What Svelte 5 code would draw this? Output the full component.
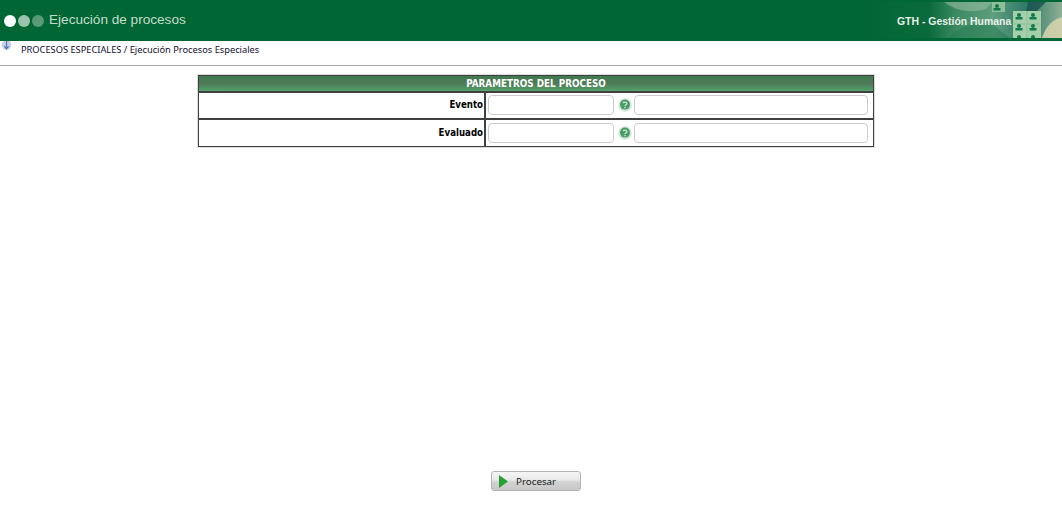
<script>
	let title = "Ejecución de procesos"
	let moduleName = "GTH - Gestión Humana"
	let crumb = "PROCESOS ESPECIALES / Ejecución Procesos Especiales"
	let rows = ["Evento", "Evaluado"]
	let people = [
		[137, 8], [159, 17], [173, 17], [159, 28], [173, 28], [159, 39], [173, 39]
	]
</script>

<div class="page">
	<header class="top">
		<svg class="art" viewBox="0 0 202 41" width="202" height="41" aria-hidden="true">
			<defs>
				<linearGradient id="fade" x1="0" x2="1" y1="0" y2="0">
					<stop offset="0" stop-color="#006633" />
					<stop offset="0.34" stop-color="#0a6a3a" />
					<stop offset="0.48" stop-color="#3d8a62" />
					<stop offset="0.66" stop-color="#5f9f7e" />
					<stop offset="0.82" stop-color="#2f7a68" />
					<stop offset="1" stop-color="#8fae95" />
				</linearGradient>
			</defs>
			<rect y="2" width="202" height="36" fill="url(#fade)" />
			<path d="M84 2 C94 10 110 14 126 9 L132 2Z" fill="#9dc0a0" opacity=".55" />
			<path d="M88 38 C96 28 114 22 132 24 L150 38Z" fill="#1f7a50" opacity=".5" />
			<path d="M168 2 L186 2 L176 12 L166 12Z" fill="#1a4f50" opacity=".8" />
			<path d="M182 38 C186 26 192 20 202 17 L202 38Z" fill="#d8d6ae" opacity=".85" />
			<rect x="132" y="2" width="13" height="10" fill="#8fbf98" />
			<rect x="153" y="11" width="28" height="27" fill="#a4cfa8" />
			<path d="M167 11v27M153 24h28" stroke="#8cbd94" stroke-width="1" />
			<svg x="0" y="2" width="202" height="36" viewBox="0 2 202 36">
				{#each people as p}
					<g fill="#127a4c">
						<circle cx={p[0]} cy={p[1] - 2} r="2" />
						<rect x={p[0] - 3.5} y={p[1]} width="7" height="2.5" />
					</g>
				{/each}
			</svg>
		</svg>
		<div class="dots">
			<span class="dot one"></span>
			<span class="dot two"></span>
			<span class="dot three"></span>
		</div>
		<h1>{title}</h1>
		<span class="module">{moduleName}</span>
	</header>

	<nav class="crumbs">
		<svg class="crumb-icon" viewBox="0 0 12 12" width="12" height="12" aria-hidden="true">
			<circle cx="5.5" cy="4" r="4.8" fill="#c4cfe8" />
			<path d="M5.5 0v7.5M3.4 5.2 5.5 8l2.1-2.8" fill="none" stroke="#5a78b8" stroke-width="1.2" />
		</svg>
		<span>{crumb}</span>
	</nav>

	<main class="content">
		<section class="panel">
			<div class="panel-inner">
				<div class="panel-title">PARAMETROS DEL PROCESO</div>
				{#each rows as row}
					<div class="row">
						<div class="label">{row}</div>
						<div class="fields">
							<input class="code" type="text" />
							<svg class="help" viewBox="0 0 14 14" width="14" height="14" aria-hidden="true">
								<circle cx="7" cy="7" r="6.8" fill="#d4e6d8" />
								<circle cx="7" cy="6.6" r="5" fill="#4a9c66" />
								<path d="M5.2 5.2C5.6 3.8 8.8 3.8 8.9 5.5 9 6.8 7.2 6.8 7 8" fill="none" stroke="#cfe6d4" stroke-width="1.2" />
								<circle cx="7" cy="9.6" r=".8" fill="#cfe6d4" />
							</svg>
							<input class="desc" type="text" />
						</div>
					</div>
				{/each}
			</div>
		</section>

		<footer class="actions">
			<button class="run" type="button">
				<svg viewBox="0 0 9 13" width="9" height="13" aria-hidden="true">
					<path d="M0 0 9 6.5 0 13Z" fill="#24a030" />
				</svg>
				Procesar
			</button>
		</footer>
	</main>
</div>

<style>
	:global(body) {
		background: #ffffff;
	}

	.page {
		height: 508px;
		width: 1062px;
		display: flex;
		flex-direction: column;
		overflow: hidden;
		font-family: "DejaVu Sans Condensed", "DejaVu Sans", sans-serif;
		color: #000000;
	}

	.top {
		position: relative;
		height: 41px;
		flex: none;
		display: flex;
		align-items: center;
		padding-left: 4px;
		box-sizing: border-box;
		background: #006633;
	}

	.art {
		position: absolute;
		right: 0;
		top: 0;
	}

	.dots {
		display: flex;
		gap: 2px;
		margin-right: 5px;
		position: relative;
	}

	.dot {
		width: 12px;
		height: 12px;
		border-radius: 50%;
	}

	.one { background: #ffffff; }
	.two { background: #9cc4ac; }
	.three { background: #5a9a78; }

	h1 {
		margin: 0;
		font-family: "Liberation Sans", sans-serif;
		font-size: 13.6px;
		font-weight: normal;
		color: #c4dccd;
		position: relative;
		top: -1px;
	}

	.module {
		position: absolute;
		left: 897px;
		top: 16px;
		font-family: "Liberation Sans", sans-serif;
		font-size: 10.45px;
		font-weight: bold;
		color: #e8f0ea;
	}

	.crumbs {
		height: 24px;
		flex: none;
		display: flex;
		align-items: flex-start;
		border-bottom: 1px solid #a8a8a8;
		font-family: "Noto Sans", sans-serif;
		font-size: 9.27px;
		color: #101030;
	}

	.crumb-icon {
		margin-left: 1px;
	}

	.crumbs span {
		margin: 2px 0 0 8px;
	}

	.content {
		flex: 1;
		display: flex;
		flex-direction: column;
		align-items: center;
		padding-top: 8px;
	}

	.panel {
		width: 678px;
		margin-left: 10px;
		box-sizing: border-box;
		border: 1px solid #dcdcdc;
	}

	.panel-inner {
		border: 1px solid #404040;
	}

	.panel-title {
		height: 15px;
		line-height: 15px;
		text-align: center;
		font-size: 9.8px;
		font-weight: bold;
		color: #ffffff;
		background: linear-gradient(#3f7a50 0, #4f7a55 50%, #4f9a68 90%, #5aa874 100%);
	}

	.row {
		display: flex;
		height: 25px;
		border-top: 2px solid #404040;
	}

	.row:last-child {
		height: 26px;
	}

	.label {
		width: 287px;
		flex: none;
		box-sizing: border-box;
		text-align: right;
		padding-right: 1px;
		line-height: 24px;
		font-size: 9.6px;
		font-weight: bold;
		border-right: 2px solid #404040;
	}

	.row:last-child .label {
		line-height: 25px;
	}

	.fields {
		display: flex;
		align-items: center;
		padding: 0 0 1px 2px;
	}

	.row:last-child .fields {
		padding-bottom: 0;
	}

	input {
		height: 20px;
		box-sizing: border-box;
		border: 1px solid #cccccc;
		border-radius: 4px;
		background: #ffffff;
		padding: 0;
		outline: none;
	}

	.code { width: 126px; }
	.desc { width: 234px; }

	.help {
		margin: -1px 2px 0 4px;
	}

	.actions {
		margin-top: auto;
		margin-bottom: 17px;
		margin-left: 10px;
	}

	.run {
		width: 90px;
		height: 20px;
		display: flex;
		align-items: center;
		gap: 8px;
		padding: 0 0 0 7px;
		box-sizing: border-box;
		border: 1px solid #b4b4b4;
		border-radius: 3px;
		background: linear-gradient(#f6f6f6 0, #e8e8e8 45%, #d2d2d2 55%, #c8c8c8 100%);
		font-family: "Noto Sans", sans-serif;
		font-size: 9.8px;
		color: #222222;
	}
</style>
